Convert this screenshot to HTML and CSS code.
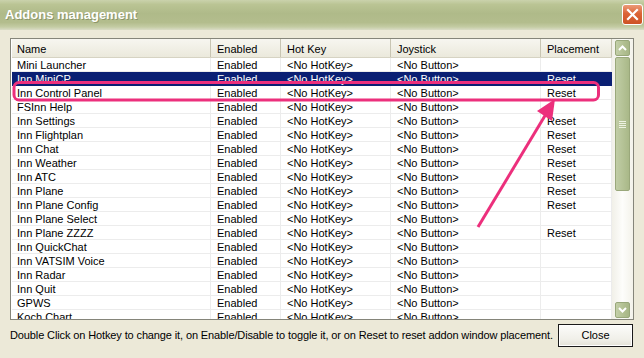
FILE: index.html
```html
<!doctype html>
<html lang="en">
  <head>
    <meta charset="UTF-8" />
    <title>Addons management</title>
    <link rel="stylesheet" href="styles.css">
  </head>
  <body>
    <div class="window">
      <div class="titlebar">
        <span class="title">Addons management</span>
        <button class="close-x" aria-label="Close">
          <svg width="13" height="13" viewBox="0 0 13 13">
            <path d="M2 2 L11 11 M11 2 L2 11" stroke="#fff" stroke-width="2.2" stroke-linecap="square"/>
          </svg>
        </button>
      </div>

      <div class="list">
        <div class="grid">
          <div class="row head">
            <div class="cell">Name</div>
            <div class="cell">Enabled</div>
            <div class="cell">Hot Key</div>
            <div class="cell">Joystick</div>
            <div class="cell">Placement</div>
          </div>
          <div class="row"><div class="cell">Mini Launcher</div><div class="cell">Enabled</div><div class="cell">&lt;No HotKey&gt;</div><div class="cell">&lt;No Button&gt;</div><div class="cell"></div></div>
          <div class="row selected"><div class="cell">Inn MiniCP</div><div class="cell">Enabled</div><div class="cell">&lt;No HotKey&gt;</div><div class="cell">&lt;No Button&gt;</div><div class="cell">Reset</div></div>
          <div class="row"><div class="cell">Inn Control Panel</div><div class="cell">Enabled</div><div class="cell">&lt;No HotKey&gt;</div><div class="cell">&lt;No Button&gt;</div><div class="cell">Reset</div></div>
          <div class="row"><div class="cell">FSInn Help</div><div class="cell">Enabled</div><div class="cell">&lt;No HotKey&gt;</div><div class="cell">&lt;No Button&gt;</div><div class="cell"></div></div>
          <div class="row"><div class="cell">Inn Settings</div><div class="cell">Enabled</div><div class="cell">&lt;No HotKey&gt;</div><div class="cell">&lt;No Button&gt;</div><div class="cell">Reset</div></div>
          <div class="row"><div class="cell">Inn Flightplan</div><div class="cell">Enabled</div><div class="cell">&lt;No HotKey&gt;</div><div class="cell">&lt;No Button&gt;</div><div class="cell">Reset</div></div>
          <div class="row"><div class="cell">Inn Chat</div><div class="cell">Enabled</div><div class="cell">&lt;No HotKey&gt;</div><div class="cell">&lt;No Button&gt;</div><div class="cell">Reset</div></div>
          <div class="row"><div class="cell">Inn Weather</div><div class="cell">Enabled</div><div class="cell">&lt;No HotKey&gt;</div><div class="cell">&lt;No Button&gt;</div><div class="cell">Reset</div></div>
          <div class="row"><div class="cell">Inn ATC</div><div class="cell">Enabled</div><div class="cell">&lt;No HotKey&gt;</div><div class="cell">&lt;No Button&gt;</div><div class="cell">Reset</div></div>
          <div class="row"><div class="cell">Inn Plane</div><div class="cell">Enabled</div><div class="cell">&lt;No HotKey&gt;</div><div class="cell">&lt;No Button&gt;</div><div class="cell">Reset</div></div>
          <div class="row"><div class="cell">Inn Plane Config</div><div class="cell">Enabled</div><div class="cell">&lt;No HotKey&gt;</div><div class="cell">&lt;No Button&gt;</div><div class="cell">Reset</div></div>
          <div class="row"><div class="cell">Inn Plane Select</div><div class="cell">Enabled</div><div class="cell">&lt;No HotKey&gt;</div><div class="cell">&lt;No Button&gt;</div><div class="cell"></div></div>
          <div class="row"><div class="cell">Inn Plane ZZZZ</div><div class="cell">Enabled</div><div class="cell">&lt;No HotKey&gt;</div><div class="cell">&lt;No Button&gt;</div><div class="cell">Reset</div></div>
          <div class="row"><div class="cell">Inn QuickChat</div><div class="cell">Enabled</div><div class="cell">&lt;No HotKey&gt;</div><div class="cell">&lt;No Button&gt;</div><div class="cell"></div></div>
          <div class="row"><div class="cell">Inn VATSIM Voice</div><div class="cell">Enabled</div><div class="cell">&lt;No HotKey&gt;</div><div class="cell">&lt;No Button&gt;</div><div class="cell"></div></div>
          <div class="row"><div class="cell">Inn Radar</div><div class="cell">Enabled</div><div class="cell">&lt;No HotKey&gt;</div><div class="cell">&lt;No Button&gt;</div><div class="cell"></div></div>
          <div class="row"><div class="cell">Inn Quit</div><div class="cell">Enabled</div><div class="cell">&lt;No HotKey&gt;</div><div class="cell">&lt;No Button&gt;</div><div class="cell"></div></div>
          <div class="row"><div class="cell">GPWS</div><div class="cell">Enabled</div><div class="cell">&lt;No HotKey&gt;</div><div class="cell">&lt;No Button&gt;</div><div class="cell"></div></div>
          <div class="row"><div class="cell">Koch Chart</div><div class="cell">Enabled</div><div class="cell">&lt;No HotKey&gt;</div><div class="cell">&lt;No Button&gt;</div><div class="cell"></div></div>
        </div>

        <!-- vertical scrollbar -->
        <div class="scrollbar">
          <div class="sb-btn">
            <svg width="9" height="6" viewBox="0 0 9 6"><path d="M1 5 L4.5 1.5 L8 5" fill="none" stroke="#fff" stroke-width="2"/></svg>
          </div>
          <div class="sb-thumb">
            <svg width="7" height="7" viewBox="0 0 7 7"><path d="M0 0.5H7M0 2.5H7M0 4.5H7M0 6.5H7" stroke="#eef2e2" stroke-width="1"/></svg>
          </div>
          <div class="sb-track"></div>
          <div class="sb-btn">
            <svg width="9" height="6" viewBox="0 0 9 6"><path d="M1 1 L4.5 4.5 L8 1" fill="none" stroke="#fff" stroke-width="2"/></svg>
          </div>
        </div>
      </div>

      <div class="footer">
        <span class="hint">Double Click on Hotkey to change it, on Enable/Disable to toggle it, or on Reset to reset addon window placement.</span>
        <button class="close-btn">Close</button>
      </div>

      <!-- annotation drawn over the dialog -->
      <svg class="marks" width="644" height="358" viewBox="0 0 644 358">
        <rect x="14" y="82.5" width="584.5" height="17.5" rx="5" fill="none" stroke="#ec2f7c" stroke-width="3"/>
        <line x1="478" y1="227" x2="546" y2="114" stroke="#ec2f7c" stroke-width="3"/>
        <polygon points="555,99 537,111 552,121" fill="#ec2f7c"/>
      </svg>
    </div>
  </body>
</html>
```

FILE: styles.css
```css
body {
  margin: 0;
  background: #ece9d8;
  font-family: "Liberation Sans", Arial, sans-serif;
  font-size: 11px;
  color: #000;
  overflow: hidden;
}
.window {
  position: relative;
  width: 644px;
  height: 358px;
}
/* Title bar */
.titlebar {
  height: 30px;
  box-sizing: border-box;
  display: flex;
  align-items: center;
  justify-content: space-between;
  padding: 0 1px 2px 5px;
  background: linear-gradient(#cad2ac 0%, #bac494 15%, #afba89 45%, #b3bd8d 75%, #c4cca4 90%, #dadcc6 100%);
}
.title {
  color: #fff;
  font-size: 13px;
  font-weight: bold;
  text-shadow: 1px 1px 0 rgba(90, 100, 60, 0.45);
}
.close-x {
  width: 21px;
  height: 21px;
  padding: 0;
  border: 1px solid #fff;
  border-radius: 3px;
  background: linear-gradient(#eb9a78, #dc6436 45%, #cd5224);
  display: flex;
  align-items: center;
  justify-content: center;
}
/* List view */
.list {
  margin: 8px 0 0 10px;
  width: 624px;
  height: 282px;
  box-sizing: border-box;
  border: 1px solid #85857a;
  padding-left: 1px;
  background: #fff;
  display: flex;
  overflow: hidden;
}
.grid {
  width: 600px;
  flex: none;
}
.row {
  display: grid;
  grid-template-columns: 199px 70px 110px 150px 71px;
  grid-template-rows: 13px;
  height: 14px;
  box-sizing: border-box;
  border-bottom: 1px solid #ececec;
}
.cell {
  padding: 1px 0 0 6px;
  line-height: 13px;
  border-right: 1px solid #ececec;
  white-space: nowrap;
  overflow: hidden;
}
.cell:first-child {
  padding-left: 5px;
}
.row.head {
  height: 19px;
  grid-template-rows: 18px;
  background: linear-gradient(#f7f6f0, #ebe9dc);
  border-bottom: 1px solid #d6d3c3;
}
.row.head .cell {
  line-height: 18px;
  border-right: 1px solid #c8c5b3;
}
.row.selected {
  background: #0a1f73;
  color: #fff;
  border-bottom-color: #0a1f73;
}
.row.selected .cell {
  border-right-color: #0a1f73;
}
/* Scrollbar */
.scrollbar {
  width: 21px;
  display: flex;
  flex-direction: column;
  align-items: center;
  background: linear-gradient(90deg, #f1f0e8, #fdfdfb 50%, #f3f2ea);
}
.sb-btn {
  width: 15px;
  height: 16px;
  margin: 1px 0;
  box-sizing: border-box;
  border: 1px solid #98a77a;
  border-radius: 2px;
  background: linear-gradient(90deg, #c3cfa8, #b1bf91 60%, #a7b686);
  display: flex;
  align-items: center;
  justify-content: center;
}
.sb-thumb {
  width: 15px;
  height: 134px;
  box-sizing: border-box;
  border: 1px solid #9aa87b;
  border-radius: 2px;
  background: linear-gradient(90deg, #c1cda6, #b3c194 60%, #a9b888);
  display: flex;
  align-items: center;
  justify-content: center;
}
.sb-track {
  flex: 1;
}
/* Footer */
.footer {
  height: 30px;
  display: flex;
  align-items: center;
  justify-content: space-between;
  padding: 0 11px 0 10px;
}
.hint {
  white-space: nowrap;
  letter-spacing: -0.12px;
}
.close-btn {
  width: 75px;
  height: 23px;
  font-family: inherit;
  font-size: 11px;
  color: #000;
  border: 1px solid #1a1a1a;
  background: linear-gradient(#fcfcfa, #f0efe8 70%, #e3e1d6);
  box-shadow: inset 0 0 0 1px #fff;
  padding: 0;
}
/* Annotation overlay */
.marks {
  position: absolute;
  left: 0;
  top: 0;
  pointer-events: none;
}
```
